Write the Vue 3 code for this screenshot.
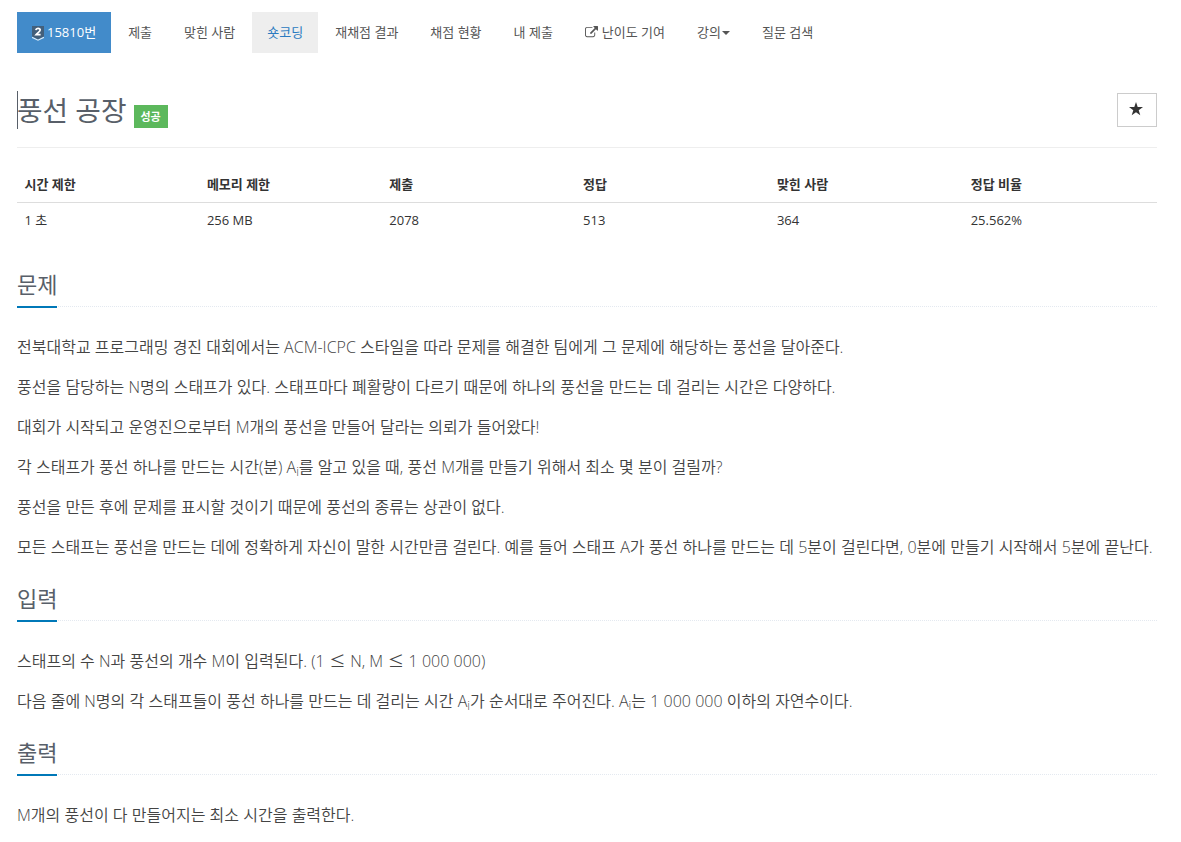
<script setup>
const menu = [
    { label: '제출' },
    { label: '맞힌 사람' },
    { label: '숏코딩', hover: true },
    { label: '재채점 결과' },
    { label: '채점 현황' },
    { label: '내 제출' },
    { label: '난이도 기여', external: true },
    { label: '강의', dropdown: true },
    { label: '질문 검색' },
];

const info = [
    { title: '시간 제한', value: '1 초' },
    { title: '메모리 제한', value: '256 MB' },
    { title: '제출', value: '2078' },
    { title: '정답', value: '513' },
    { title: '맞힌 사람', value: '364' },
    { title: '정답 비율', value: '25.562%' },
];
</script>

<template>
    <div class="container">
        <ul class="nav-pills">
            <li>
                <a class="active">
                    <svg class="tier" viewBox="0 0 12 15">
                        <path d="M0 0h12v10.5L6 13.5 0 10.5z" fill="#435f7a" />
                        <path d="M0 11.4l6 2.8 6-2.8" fill="none" stroke="#dcecf7" stroke-width="1.2" />
                        <path
                            d="M3.8 4.1C4 2.8 5 2.3 6 2.3c1.3 0 2.2.7 2.2 1.8C8.2 5.800 5.5 6.7 4 8.7h4.6"
                            fill="none"
                            stroke="#fff"
                            stroke-width="1.7"
                        />
                    </svg>
                    <span>15810번</span>
                </a>
            </li>
            <li v-for="item in menu" :key="item.label">
                <a :class="{ hover: item.hover }">
                    <svg v-if="item.external" class="external" viewBox="0 0 1792 1792">
                        <path
                            fill="currentColor"
                            d="M1408 928v320q0 119-84.500 203.500T1120 1536H288q-119 0-203.500-84.500T0 1248V416q0-119 84.500-203.500T288 128h704q14 0 23 9t9 23v64q0 14-9 23t-23 9H288q-66 0-113 47t-47 113v832q0 66 47 113t113 47h832q66 0 113-47t47-113V928q0-14 9-23t23-9h64q14 0 23 9t9 23zm384-864v512q0 26-19 45t-45 19-45-19l-176-176-652 652q-10 10-23 10t-23-10L695 983q-10-10-10-23t10-23l652-652-176-176q-19-19-19-45t19-45 45-19h512q26 0 45 19t19 45z"
                        />
                    </svg>
                    <span>{{ item.label }}</span>
                    <i v-if="item.dropdown" class="caret"></i>
                </a>
            </li>
        </ul>

        <div class="page-header">
            <h1>풍선 공장</h1>
            <span class="label">성공</span>
            <button class="favorite" aria-label="star">
                <svg viewBox="0 0 14 14">
                    <path fill="#333" d="M7 0l1.7 5H14L9.7 8.2l1.6 5.100L7 10.2l-4.300 3.100 1.600-5.100L0 5h5.300z" />
                </svg>
            </button>
        </div>

        <table>
            <thead>
                <tr>
                    <th v-for="col in info" :key="col.title">{{ col.title }}</th>
                </tr>
            </thead>
            <tbody>
                <tr>
                    <td v-for="col in info" :key="col.title">{{ col.value }}</td>
                </tr>
            </tbody>
        </table>

        <section>
            <div class="headline"><h2>문제</h2></div>
            <p>전북대학교 프로그래밍 경진 대회에서는 ACM-ICPC 스타일을 따라 문제를 해결한 팀에게 그 문제에 해당하는 풍선을 달아준다.</p>
            <p>풍선을 담당하는 N명의 스태프가 있다. 스태프마다 폐활량이 다르기 때문에 하나의 풍선을 만드는 데 걸리는 시간은 다양하다.</p>
            <p>대회가 시작되고 운영진으로부터 M개의 풍선을 만들어 달라는 의뢰가 들어왔다!</p>
            <p>각 스태프가 풍선 하나를 만드는 시간(분) A<sub>i</sub>를 알고 있을 때, 풍선 M개를 만들기 위해서 최소 몇 분이 걸릴까?</p>
            <p>풍선을 만든 후에 문제를 표시할 것이기 때문에 풍선의 종류는 상관이 없다.</p>
            <p>모든 스태프는 풍선을 만드는 데에 정확하게 자신이 말한 시간만큼 걸린다. 예를 들어 스태프 A가 풍선 하나를 만드는 데 5분이 걸린다면, 0분에 만들기 시작해서 5분에 끝난다.</p>
        </section>

        <section>
            <div class="headline"><h2>입력</h2></div>
            <p>스태프의 수 N과 풍선의 개수 M이 입력된다. (1 <span class="op">≤</span> N, M <span class="op">≤</span> 1 000 000)</p>
            <p>다음 줄에 N명의 각 스태프들이 풍선 하나를 만드는 데 걸리는 시간 A<sub>i</sub>가 순서대로 주어진다. A<sub>i</sub>는 1 000 000 이하의 자연수이다.</p>
        </section>

        <section>
            <div class="headline"><h2>출력</h2></div>
            <p>M개의 풍선이 다 만들어지는 최소 시간을 출력한다.</p>
        </section>
    </div>
</template>

<style>
body {
    margin: 0;
    background: #fff;
}
</style>

<style scoped>
.container {
    box-sizing: border-box;
    width: 1181px;
    height: 842px;
    padding: 12px 24px 0 17px;
    overflow: hidden;
    font-family: 'Open Sans', 'Noto Sans CJK KR', sans-serif;
    font-size: 13px;
    color: #333;
}

.nav-pills {
    display: flex;
    gap: 2px;
    margin: 0;
    padding: 0;
    list-style: none;
}

.nav-pills a {
    display: flex;
    align-items: center;
    box-sizing: border-box;
    height: 41px;
    padding: 0 15px;
    line-height: 21px;
    color: #555;
    white-space: nowrap;
}

.nav-pills .active {
    background: #428bca;
    color: #fff;
}

.nav-pills .hover {
    background: #eee;
    color: #2a7ac0;
}

.tier {
    width: 12px;
    height: 15px;
    margin: 2px 3px 0 0;
}

.external {
    width: 13px;
    height: 13px;
    margin-right: 4px;
}

.caret {
    margin: 1px 0 0 1px;
    border-top: 4px solid currentColor;
    border-left: 4px solid transparent;
    border-right: 4px solid transparent;
}

.page-header {
    display: flex;
    align-items: flex-start;
    box-sizing: border-box;
    height: 57px;
    margin-top: 38px;
    border-bottom: 1px solid #eee;
}

h1 {
    box-sizing: border-box;
    height: 38px;
    margin: 0 7px 0 0;
    border-left: 1px solid #585f69;
    text-indent: -1px;
    font-size: 27.8px;
    font-weight: 400;
    line-height: 39px;
    color: #585f69;
}

.label {
    width: 34px;
    height: 23px;
    margin-top: 14px;
    background: #5cb85c;
    color: #fff;
    font-size: 11px;
    font-weight: 700;
    line-height: 23px;
    text-align: center;
}

.favorite {
    display: flex;
    align-items: center;
    justify-content: center;
    box-sizing: border-box;
    width: 40px;
    height: 34px;
    margin: 2px 0 0 auto;
    padding: 0 2px 2px 0;
    border: 1px solid #ccc;
    background: #fff;
}

.favorite svg {
    width: 14px;
    height: 14px;
}

table {
    width: 1140px;
    margin-top: 20px;
    border-collapse: collapse;
    table-layout: fixed;
}

th,
td {
    box-sizing: border-box;
    width: 17%;
    line-height: 18px;
    text-align: left;
}

th:nth-child(-n + 2) {
    width: 16%;
}

th {
    height: 34px;
    padding: 0 7.5px 2px;
    border-bottom: 1px solid #ddd;
    font-weight: 700;
}

td {
    height: 35px;
    padding: 1px 7.5px 0;
}

section {
    color: #444;
}

table + section {
    margin-top: 31px;
}

section + section {
    margin-top: 23px;
}

.headline {
    display: flex;
    height: 38px;
    margin-bottom: 28px;
    border-bottom: 1px dotted #e4e9f0;
}

h2 {
    height: 38px;
    margin: 0;
    border-bottom: 2px solid #0078b8;
    font-size: 22px;
    font-weight: 400;
    line-height: 33px;
    color: #585f69;
}

p {
    height: 24px;
    margin: 0 0 16px;
    font-size: 16px;
    font-weight: 350;
    line-height: 24px;
    word-spacing: 0.06px;
    white-space: nowrap;
}

.op {
    margin: 0 0.5px;
    font-family: 'Noto Sans CJK KR', sans-serif;
    line-height: 1;
}

sub {
    position: relative;
    bottom: -0.25em;
    font-size: 75%;
    line-height: 0;
    vertical-align: baseline;
}
</style>
